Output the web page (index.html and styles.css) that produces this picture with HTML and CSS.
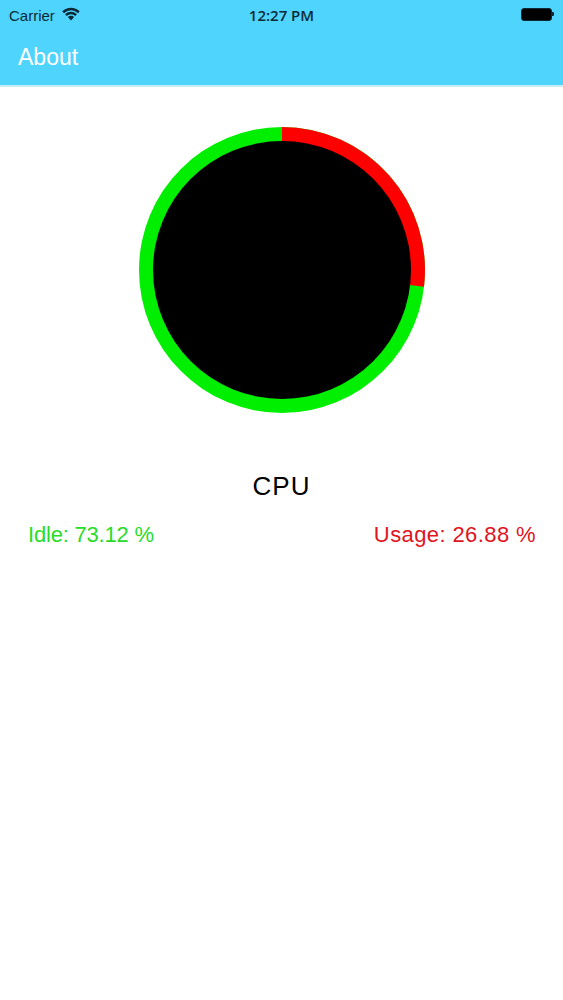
FILE: index.html
```html
<!DOCTYPE html>
<html>
<head>
<meta charset="utf-8">
<link rel="stylesheet" href="styles.css">
</head>
<body>
<div class="top">
  <div class="status">
    <div class="carrier">Carrier
      <svg class="wifi" width="18" height="14" viewBox="0 0 17 13">
        <path d="M0.3 4.0 A11.8 11.8 0 0 1 16.7 4.0 L15.1 5.7 A9.5 9.5 0 0 0 1.9 5.7 Z" fill="#0b2a36"/>
        <path d="M2.9 6.7 A8.1 8.1 0 0 1 14.1 6.7 L12.5 8.4 A5.8 5.8 0 0 0 4.5 8.4 Z" fill="#0b2a36"/>
        <path d="M5.5 9.4 A4.3 4.3 0 0 1 11.5 9.4 L8.5 12.6 Z" fill="#0b2a36"/>
      </svg>
    </div>
    <div class="time">12:27 PM</div>
    <div class="battery"><span class="cell"></span><span class="nub"></span></div>
  </div>
  <div class="navbar"><span class="title">About</span></div>
</div>
<main class="content">
  <svg class="chart" width="286" height="286" viewBox="0 0 286 286">
    <circle cx="143" cy="143" r="143" fill="#00ef00"/>
    <path d="M143 143 L143 0 A143 143 0 0 1 285.0 159.86 Z" fill="#ff0000"/>
    <circle cx="143" cy="143" r="129" fill="#000"/>
  </svg>
  <div class="label">CPU</div>
  <div class="stats">
    <span class="idle">Idle: 73.12 %</span>
    <span class="usage">Usage: 26.88 %</span>
  </div>
</main>
</body>
</html>
```
FILE: styles.css
```css
html, body {
  margin: 0;
  padding: 0;
  background: #fff;
  font-family: "Liberation Sans", Arial, sans-serif;
}
body {
  width: 563px;
}
.top {
  background: #4fd4fe;
  border-bottom: 2px solid #c6ecf8;
}
.status {
  height: 28px;
  display: flex;
  align-items: center;
  justify-content: space-between;
  padding: 0 9px 0 9px;
  position: relative;
  color: #0b2a36;
  font-size: 15px;
}
.carrier {
  display: flex;
  align-items: center;
  gap: 7px;
  padding-top: 2px;
}
.wifi {
  display: block;
  margin-top: -3px;
}
.time {
  position: absolute;
  left: 0;
  right: 0;
  text-align: center;
  font-family: "Open Sans", "Liberation Sans", sans-serif;
  font-weight: 600;
  font-size: 15px;
  padding-top: 1px;
}
.battery {
  display: flex;
  align-items: center;
}
.cell {
  width: 29px;
  height: 11px;
  background: #000;
  border: 1px solid #0b2a36;
  border-radius: 3px;
}
.nub {
  width: 2px;
  height: 4px;
  background: #0b2a36;
  border-radius: 0 1px 1px 0;
}
.navbar {
  height: 57px;
  display: flex;
  align-items: center;
  padding-left: 18px;
}
.title {
  color: #fff;
  font-size: 23px;
  margin-top: 1px;
}
.content {
  display: flex;
  flex-direction: column;
  align-items: center;
}
.chart {
  display: block;
  margin-top: 40px;
  margin-left: 1px;
}
.label {
  margin-top: 58px;
  font-size: 26px;
  letter-spacing: 1px;
  color: #000;
  line-height: 30px;
}
.stats {
  align-self: stretch;
  display: flex;
  justify-content: space-between;
  padding: 0 27px 0 28px;
  margin-top: 21px;
  font-size: 22px;
  line-height: 26px;
}
.idle {
  color: #28dc28;
  letter-spacing: -0.2px;
}
.usage {
  color: #e0141e;
  letter-spacing: 0.4px;
}
```
